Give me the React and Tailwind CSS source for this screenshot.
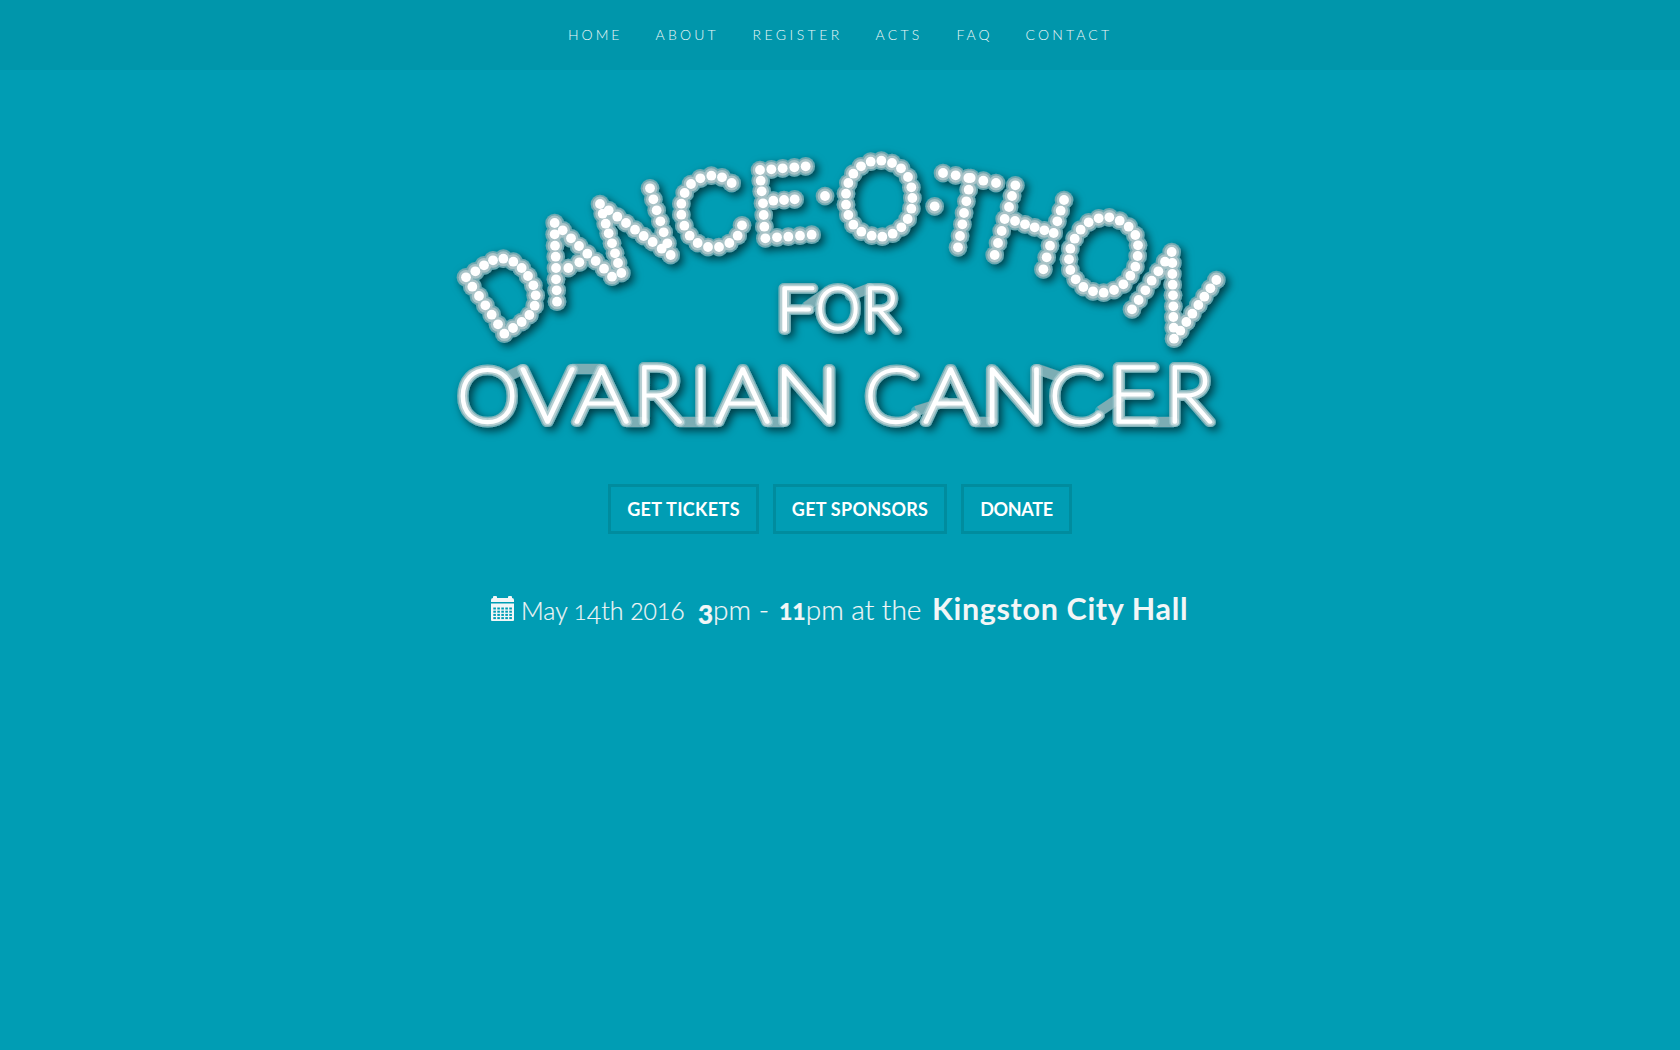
import { useLayoutEffect, useState } from "react";

const NAV = [
  ["HOME", "w-[87.5px]", "tracking-[3px]"],
  ["ABOUT", "w-[97px]", "tracking-[3.2px]"],
  ["REGISTER", "w-[123px]", "tracking-[3.45px]"],
  ["ACTS", "w-[81px]", "tracking-[3.3px]"],
  ["FAQ", "w-[69px]", "tracking-[2.9px]"],
  ["CONTACT", "w-[90px]", "tracking-[3.15px]"],
];

/* Marquee bulbs, grouped by sign section: origin followed by x,y pairs at 3x scale. */
const BULBS = [
  [440, 140, "78,412 106,394 132,376 159,361 190,356 220,365 245,384 264,408 280,436 287,466 284,497 268,525 245,546 219,564 193,581 174,553 155,524 136,496 117,468 97,440"],
  [440, 140, "344,249 344,283 345,317 347,350 348,384 348,418 350,451 351,485 368,271 393,295 417,318 442,341 467,363 492,386 516,410 385,384 418,367"],
  [440, 140, "480,192 488,221 497,251 506,280 516,310 525,340 534,369 544,399 506,211 532,230 558,249 585,269 611,288 638,306 665,326 692,345 630,145 640,178 650,211 661,244 671,277 682,310"],
  [640, 140, "275,129 246,112 214,107 181,115 153,132 134,159 124,191 124,224 133,257 149,287 173,309 204,321 237,321 268,309 293,287 306,256"],
  [640, 140, "360,90 394,88 428,85 463,82 497,79 362,122 365,154 369,190 371,225 373,260 376,295 411,292 445,290 480,287 515,284 400,182 432,180 464,178 555,168"],
  [820, 140, "184,62 216,69 243,85 264,111 274,142 277,174 274,206 263,237 244,262 218,281 187,290 155,287 124,275 100,254 85,225 78,194 78,161 85,129 100,101 123,79 152,65 344,199"],
  [820, 140, "369,99 407,106 445,114 452,114 490,122 528,129 446,149 439,184 432,219 427,253 420,288 414,322"],
  [820, 140, "586,136 576,168 567,201 554,237 545,273 534,309 524,345 585,243"],
  [1010, 150, "45,223 74,232 103,241 131,249 162,150 152,182 142,214 120,287 110,322 100,358"],
  [1010, 150, "298,202 329,212 356,230 376,255 384,286 383,318 376,350 361,377 340,403 312,420 281,428 249,424 220,411 197,388 181,360 177,328 181,296 194,266 212,239 236,217 266,205"],
  [1010, 150, "366,478 386,450 406,421 425,392 445,364 465,335 485,306 487,339 487,372 488,404 489,436 490,469 490,501 491,533 492,566 511,542 529,516 547,491 565,465 583,440 601,415 619,390"],
].flatMap(([ox, oy, pts]) =>
  pts.split(" ").map((p) => {
    const [x, y] = p.split(",").map(Number);
    return [ox + x / 3, oy + y / 3];
  })
);

/* Neon letters: character, left, right, top and bottom of the tube's centre line. */
const NEON = [
  ["F", 784.5, 812, 289, 329.5], ["O", 820, 855.5, 289, 329.5], ["R", 870, 896.5, 289, 329.5],
  ["O", 462.5, 512.5, 369.5, 422], ["V", 523, 572.5, 369.5, 422], ["A", 577, 626.5, 369.5, 422],
  ["R", 644, 679.5, 369.5, 422], ["I", 700.5, 700.5, 369.5, 422], ["A", 718.5, 767.5, 369.5, 422],
  ["N", 784, 829.5, 369.5, 422],
  ["C", 870, 915.5, 369.5, 422], ["A", 926, 975.5, 369.5, 422], ["N", 992, 1037, 369.5, 422],
  ["C", 1054.5, 1099.5, 369.5, 422], ["E", 1118.5, 1153.5, 369.5, 422], ["R", 1174.5, 1210, 369.5, 422],
];

const LINKS = [
  [806, 307, 826, 293], [850, 296, 870, 288],
  [507, 377, 523, 369], [572, 369, 601, 369], [626, 422, 644, 422], [679, 422, 718, 422],
  [767, 422, 784, 422], [916, 411, 945, 402], [975, 422, 992, 422], [1037, 369, 1060, 377],
  [1100, 411, 1121, 397], [1153, 422, 1174, 422],
];

const NEON_FONT = '100 100px Lato, sans-serif';

/* Scales every glyph so that its ink fills the box of its neon tube. */
function fitGlyphs() {
  const ctx = document.createElement("canvas").getContext("2d");
  ctx.font = NEON_FONT;
  return NEON.map(([ch, x0, x1, y0, y1]) => {
    const m = ctx.measureText(ch);
    const inkW = m.actualBoundingBoxRight + m.actualBoundingBoxLeft;
    const inkH = m.actualBoundingBoxAscent + m.actualBoundingBoxDescent;
    const sy = (y1 - y0 + 1.5) / inkH;
    const sx = ch === "I" ? sy : (x1 - x0 + 1.5) / inkW;
    const left = ch === "I" ? x0 - (inkW * sx) / 2 : x0 - 0.75;
    return {
      ch,
      sx,
      sy,
      tx: left + m.actualBoundingBoxLeft * sx,
      ty: y1 + 0.25 - m.actualBoundingBoxDescent * sy,
    };
  });
}

function NeonLayer({ glyphs, color, width }) {
  return (
    <g fill={color} stroke={color} strokeLinejoin="round" strokeLinecap="round">
      {glyphs.map((g, i) => (
        <text
          key={i}
          className="font-[Lato] font-thin"
          fontSize="100"
          strokeWidth={width / g.sy}
          transform={`translate(${g.tx} ${g.ty}) scale(${g.sx} ${g.sy})`}
        >
          {g.ch}
        </text>
      ))}
    </g>
  );
}

function Logo() {
  const [glyphs, setGlyphs] = useState([]);
  useLayoutEffect(() => setGlyphs(fitGlyphs()), []);
  return (
    <svg
      className="block h-[320px] w-[800px]"
      viewBox="440 140 800 320"
      role="img"
      aria-label="Dance-O-Thon for Ovarian Cancer"
    >
      <defs>
        <filter id="drop" x="-5%" y="-5%" width="110%" height="115%">
          <feDropShadow dx="3.5" dy="3.5" stdDeviation="4" floodColor="#000" floodOpacity="0.62" />
        </filter>
      </defs>
      <g filter="url(#drop)">
        <g fill="#6fa8b0">{BULBS.map(([x, y], i) => <circle key={i} cx={x} cy={y} r="9.3" />)}</g>
        <g fill="#a9c3c7">{BULBS.map(([x, y], i) => <circle key={i} cx={x} cy={y} r="7.4" />)}</g>
        <g fill="#fff">{BULBS.map(([x, y], i) => <circle key={i} cx={x} cy={y} r="4.9" />)}</g>
      </g>
      <g filter="url(#drop)">
        <g stroke="#5f9ba4" strokeWidth="10.5">
          {LINKS.map(([a, b, c, d], i) => <line key={i} x1={a} y1={b} x2={c} y2={d} />)}
        </g>
        <NeonLayer glyphs={glyphs} color="#7db2b9" width={10} />
        <NeonLayer glyphs={glyphs} color="#b7cfd2" width={7.2} />
        <NeonLayer glyphs={glyphs} color="#ffffff" width={3.3} />
        <g stroke="#fff" strokeOpacity="0.18" strokeWidth="10" strokeLinecap="round">
          {LINKS.map(([a, b, c, d], i) => <line key={i} x1={a} y1={b} x2={c} y2={d} />)}
        </g>
      </g>
    </svg>
  );
}

function CalendarIcon() {
  const cells = [];
  for (let r = 0; r < 4; r++) for (let c = 0; c < 5; c++) cells.push([2.3 + c * 4, 11.5 + r * 3.2]);
  return (
    <svg className="mt-[16px] block h-[25px] w-[23px] shrink-0" viewBox="0 0 23 25" fill="#f2f6f7">
      <path d="M0 6V4Q0 2 2 2V1Q2 0 3 0H5Q6 0 6 1V2H17V1Q17 0 18 0H20Q21 0 21 1V2Q23 2 23 4V6Z" />
      <path d="M0 7.4H23V24Q23 25 22 25H1Q0 25 0 24Z" />
      {cells.map(([x, y], i) => <rect key={i} x={x} y={y} width="2.6" height="2" fill="#009db4" />)}
    </svg>
  );
}

const BUTTON = "flex h-[50px] items-center justify-center border-[3px] border-[#008c9e] text-[18px] font-bold text-white";

export default function App() {
  return (
    <div className="h-[1050px] w-full overflow-hidden bg-[#009db4] font-[Lato,sans-serif]">
      <nav className="flex h-[70px] items-center bg-[#0096ab] pb-[2px] pl-[568px] text-[14px] font-light text-[#eef8f9]">
        {NAV.map(([label, width, tracking]) => (
          <a key={label} className={`${width} ${tracking} block shrink-0 whitespace-nowrap`}>{label}</a>
        ))}
      </nav>
      <main className="flex flex-col items-center pt-[70px]">
        <Logo />
        <div className="mt-[24px] flex gap-[14px]">
          <a className={`${BUTTON} w-[151px] tracking-[0.35px]`}>GET TICKETS</a>
          <a className={`${BUTTON} w-[174px] tracking-[0.25px]`}>GET SPONSORS</a>
          <a className={`${BUTTON} w-[111px] tracking-[-0.3px]`}>DONATE</a>
        </div>
        <div className="mt-[46px] flex w-[698px] items-start text-[#f2f6f7]">
          <CalendarIcon />
          <p className="ml-[7px] flex items-baseline whitespace-pre pt-[3px] text-[28px] font-light leading-[50px] [-webkit-text-stroke:0.2px]">
            <span className="w-[177px] shrink-0 text-[25px]">
              May <span className="text-[22px]">1</span>
              <span className="inline-block translate-y-1 text-[25px] leading-none">4</span>th{" "}
              <span className="text-[23px]">201</span>6
            </span>
            <span className="w-[81px] shrink-0">
              <b className="inline-block translate-y-1 text-[26px] font-black leading-none">3</b>pm -
            </span>
            <span className="w-[153px] shrink-0">
              <b className="text-[23px] font-black">11</b>pm at the
            </span>
            <b className="shrink-0 text-[30.5px] font-bold tracking-[0.65px] [-webkit-text-stroke:0px]">Kingston City Hall</b>
          </p>
        </div>
      </main>
    </div>
  );
}
